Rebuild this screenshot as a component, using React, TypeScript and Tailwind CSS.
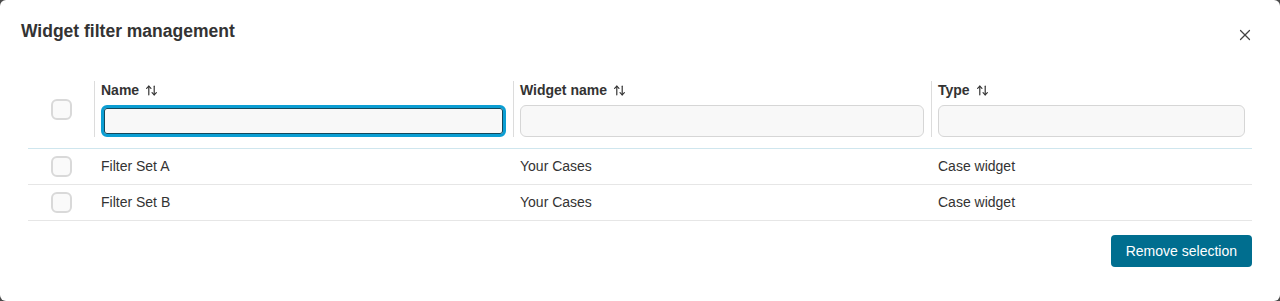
import { X } from "lucide-react";

const rows = [
  { name: "Filter Set A", widget: "Your Cases", type: "Case widget" },
  { name: "Filter Set B", widget: "Your Cases", type: "Case widget" },
];

function SortIcon() {
  return (
    <svg width="13" height="13" viewBox="0 0 24 24" fill="none" stroke="currentColor" strokeWidth="2.2" strokeLinecap="round" strokeLinejoin="round" className="ml-1.5 text-[#333]">
      <path d="m3 8 4-4 4 4" />
      <path d="M7 4v16" />
      <path d="m21 16-4 4-4-4" />
      <path d="M17 20V4" />
    </svg>
  );
}

function Checkbox() {
  return <div className="h-[21px] w-[21px] rounded-[6px] border-2 border-[#d9d9d9] bg-[#fafafa]" />;
}

function HeaderCell({ label, focused }: { label: string; focused?: boolean }) {
  return (
    <div className="flex flex-col border-l border-[#dcdcdc] pl-[6px] pr-[7px]">
      <div className="flex h-[18px] items-center text-sm font-bold text-[#333]">
        {label}
        <SortIcon />
      </div>
      <input
        className={`mt-[6px] h-8 w-full rounded-[6px] bg-[#f8f8f8] px-2 text-sm outline-none ${
          focused ? "border-[3px] border-[#0b9ed3] shadow-[inset_0_0_0_1px_#12485c]" : "border border-[#d6d6d6]"
        }`}
      />
    </div>
  );
}

export default function App() {
  return (
    <div className="h-[301px] w-[1280px] bg-[#4a4a4a]" style={{ fontFamily: '"Liberation Sans", Arial, sans-serif' }}>
      <div className="flex h-full flex-col rounded-[6px] bg-white">
        <div className="flex h-[44px] items-start justify-between pl-[21px] pr-[26px] pt-[19px]">
          <h1 className="text-[17.5px] leading-6 font-bold text-[#333]">Widget filter management</h1>
          <button className="mt-[7px] text-[#444]">
            <X size={18} strokeWidth={1.6} />
          </button>
        </div>

        <div className="mx-7 mt-[37px]">
          <div className="grid grid-cols-[66px_419px_418px_1fr] border-b border-[#cfe6ee] pb-[11px]">
            <div className="flex items-center justify-center pl-px">
              <Checkbox />
            </div>
            <HeaderCell label="Name" focused />
            <HeaderCell label="Widget name" />
            <HeaderCell label="Type" />
          </div>
          {rows.map(r => (
            <div key={r.name} className="grid h-9 grid-cols-[66px_419px_418px_1fr] items-center border-b border-[#e6e6e6] pb-px text-sm text-[#333]">
              <div className="flex justify-center pl-px">
                <Checkbox />
              </div>
              <div className="pl-[7px]">{r.name}</div>
              <div className="pl-[7px]">{r.widget}</div>
              <div className="pl-[7px]">{r.type}</div>
            </div>
          ))}
          <div className="mt-[14px] flex justify-end">
            <button className="h-8 rounded-[4px] bg-[#006e8f] px-[15px] text-sm text-white">Remove selection</button>
          </div>
        </div>
      </div>
    </div>
  );
}
